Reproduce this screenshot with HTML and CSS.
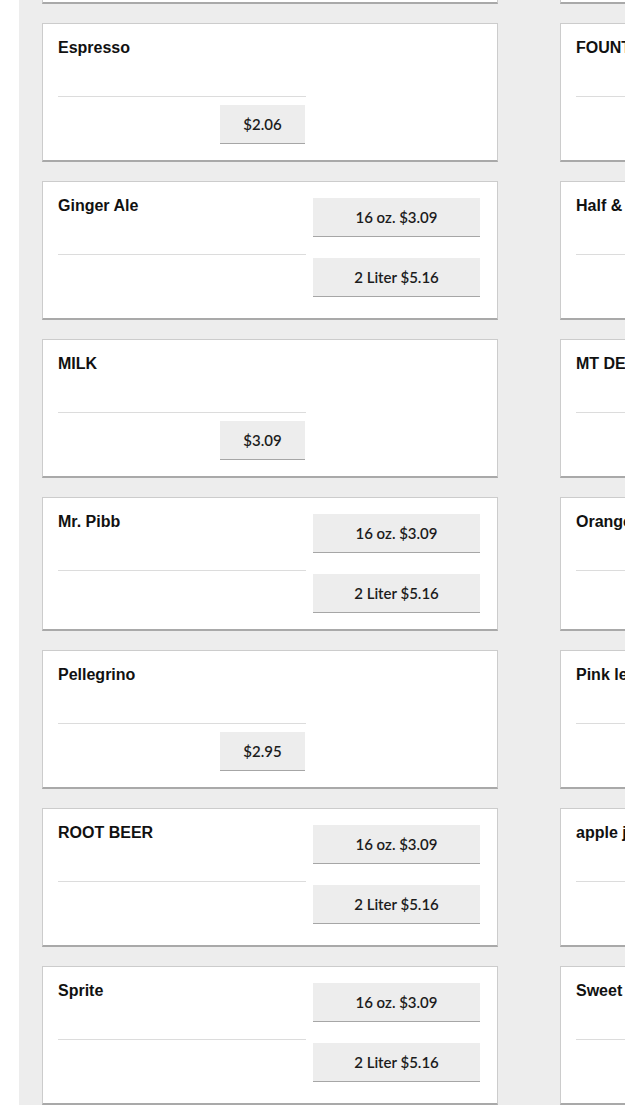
FILE: index.html
```html
<!DOCTYPE html>
<html lang="en">
  <head>
    <meta charset="utf-8" />
    <title>Drinks</title>
    <link rel="stylesheet" href="styles.css">
  </head>
  <body>
    <div class="menu-wrapper">
      <div class="menu-list">
        <div class="menu-item">
          <div class="menu-item-info">
            <h3 class="menu-item-name">Diet Coke</h3>
            <hr class="menu-item-rule" />
            <div class="menu-item-single"><button class="price-button single">$2.06</button></div>
          </div>
        </div>
        <div class="menu-item">
          <div class="menu-item-info">
            <h3 class="menu-item-name">Dr. Pepper</h3>
            <hr class="menu-item-rule" />
            <div class="menu-item-single"><button class="price-button single">$2.06</button></div>
          </div>
        </div>

        <div class="menu-item">
          <div class="menu-item-info">
            <h3 class="menu-item-name">Espresso</h3>
            <hr class="menu-item-rule" />
            <div class="menu-item-single"><button class="price-button single">$2.06</button></div>
          </div>
        </div>
        <div class="menu-item">
          <div class="menu-item-info">
            <h3 class="menu-item-name">FOUNTAIN DRINK</h3>
            <hr class="menu-item-rule" />
            <div class="menu-item-single"><button class="price-button single">$2.29</button></div>
          </div>
        </div>

        <div class="menu-item">
          <div class="menu-item-info">
            <h3 class="menu-item-name">Ginger Ale</h3>
            <hr class="menu-item-rule" />
          </div>
          <div class="menu-item-prices">
            <button class="price-button">16 oz. $3.09</button>
            <button class="price-button">2 Liter $5.16</button>
          </div>
        </div>
        <div class="menu-item">
          <div class="menu-item-info">
            <h3 class="menu-item-name">Half &amp; Half</h3>
            <hr class="menu-item-rule" />
            <div class="menu-item-single"><button class="price-button single">$2.95</button></div>
          </div>
        </div>

        <div class="menu-item">
          <div class="menu-item-info">
            <h3 class="menu-item-name">MILK</h3>
            <hr class="menu-item-rule" />
            <div class="menu-item-single"><button class="price-button single">$3.09</button></div>
          </div>
        </div>
        <div class="menu-item">
          <div class="menu-item-info">
            <h3 class="menu-item-name">MT DEW</h3>
            <hr class="menu-item-rule" />
            <div class="menu-item-single"><button class="price-button single">$2.06</button></div>
          </div>
        </div>

        <div class="menu-item">
          <div class="menu-item-info">
            <h3 class="menu-item-name">Mr. Pibb</h3>
            <hr class="menu-item-rule" />
          </div>
          <div class="menu-item-prices">
            <button class="price-button">16 oz. $3.09</button>
            <button class="price-button">2 Liter $5.16</button>
          </div>
        </div>
        <div class="menu-item">
          <div class="menu-item-info">
            <h3 class="menu-item-name">Orange Soda</h3>
            <hr class="menu-item-rule" />
          </div>
          <div class="menu-item-prices">
            <button class="price-button">16 oz. $3.09</button>
            <button class="price-button">2 Liter $5.16</button>
          </div>
        </div>

        <div class="menu-item">
          <div class="menu-item-info">
            <h3 class="menu-item-name">Pellegrino</h3>
            <hr class="menu-item-rule" />
            <div class="menu-item-single"><button class="price-button single">$2.95</button></div>
          </div>
        </div>
        <div class="menu-item">
          <div class="menu-item-info">
            <h3 class="menu-item-name">Pink lemonade</h3>
            <hr class="menu-item-rule" />
            <div class="menu-item-single"><button class="price-button single">$2.95</button></div>
          </div>
        </div>

        <div class="menu-item">
          <div class="menu-item-info">
            <h3 class="menu-item-name">ROOT BEER</h3>
            <hr class="menu-item-rule" />
          </div>
          <div class="menu-item-prices">
            <button class="price-button">16 oz. $3.09</button>
            <button class="price-button">2 Liter $5.16</button>
          </div>
        </div>
        <div class="menu-item">
          <div class="menu-item-info">
            <h3 class="menu-item-name">apple juice</h3>
            <hr class="menu-item-rule" />
            <div class="menu-item-single"><button class="price-button single">$2.95</button></div>
          </div>
        </div>

        <div class="menu-item">
          <div class="menu-item-info">
            <h3 class="menu-item-name">Sprite</h3>
            <hr class="menu-item-rule" />
          </div>
          <div class="menu-item-prices">
            <button class="price-button">16 oz. $3.09</button>
            <button class="price-button">2 Liter $5.16</button>
          </div>
        </div>
        <div class="menu-item">
          <div class="menu-item-info">
            <h3 class="menu-item-name">Sweet Tea</h3>
            <hr class="menu-item-rule" />
            <div class="menu-item-single"><button class="price-button single">$2.95</button></div>
          </div>
        </div>
      </div>
    </div>
  </body>
</html>
```

FILE: styles.css
```css
:root {
    --page-grey: #ededed;
    --card-border: #cccccc;
    --card-border-bottom: #a9a9a9;
    --rule-color: #dcdcdc;
    --button-bg: #ededed;
    --button-border: #a6a6a6;
}

html, body {
    margin: 0;
    padding: 0;
    height: 100%;
    overflow: hidden;
    background: #fff;
    font-family: "Liberation Sans", Arial, sans-serif;
    color: #111;
}

.menu-wrapper {
    margin-left: 19px;
    min-height: 100vh;
    background: var(--page-grey);
    padding: 0 23px;
}

.menu-list {
    display: grid;
    grid-template-columns: 456px 456px;
    column-gap: 62px;
    row-gap: 19px;
    margin-top: -135px;
}

.menu-item {
    display: grid;
    grid-template-columns: 248px 167px;
    justify-content: space-between;
    align-items: start;
    background: #fff;
    border: 1px solid var(--card-border);
    border-bottom: 2px solid var(--card-border-bottom);
    padding: 16px 17px 16px 15px;
}

.menu-item-name {
    margin: 0 0 40px;
    font-size: 16px;
    line-height: 16px;
    font-weight: bold;
    white-space: nowrap;
}

.menu-item-rule {
    margin: 0;
    border: 0;
    border-top: 1px solid var(--rule-color);
}

.menu-item-single {
    display: flex;
    justify-content: flex-end;
    padding-top: 8px;
    padding-right: 1px;
}

.menu-item-prices {
    display: flex;
    flex-direction: column;
    gap: 21px;
}

.price-button {
    appearance: none;
    height: 39px;
    width: 100%;
    margin: 0;
    padding: 0 8px;
    border: 0;
    border-bottom: 1px solid var(--button-border);
    border-radius: 0;
    background: var(--button-bg);
    color: #1c1c1c;
    font-family: Lato, "Liberation Sans", sans-serif;
    font-size: 15px;
    font-weight: 600;
}

.price-button.single {
    width: 85px;
}
```
